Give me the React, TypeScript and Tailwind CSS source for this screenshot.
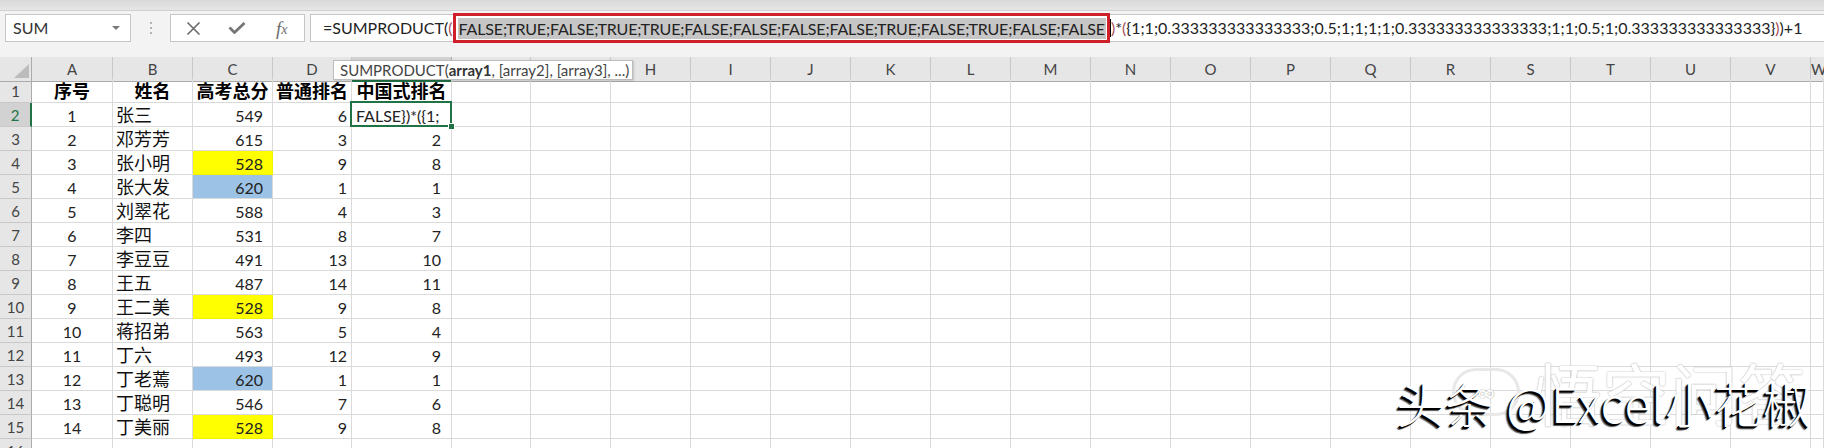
const COLS = ['A', 'B', 'C', 'D', 'E', 'F', 'G', 'H', 'I', 'J', 'K', 'L', 'M', 'N', 'O', 'P', 'Q', 'R', 'S', 'T', 'U', 'V', 'W'];

type Row = { no: number; name: string; score: number; rank: number; cn: number | string; fill?: 'y' | 'b' };

const rows: Row[] = [
  { no: 1, name: '张三', score: 549, rank: 6, cn: 'FALSE})*({1;' },
  { no: 2, name: '邓芳芳', score: 615, rank: 3, cn: 2 },
  { no: 3, name: '张小明', score: 528, rank: 9, cn: 8, fill: 'y' },
  { no: 4, name: '张大发', score: 620, rank: 1, cn: 1, fill: 'b' },
  { no: 5, name: '刘翠花', score: 588, rank: 4, cn: 3 },
  { no: 6, name: '李四', score: 531, rank: 8, cn: 7 },
  { no: 7, name: '李豆豆', score: 491, rank: 13, cn: 10 },
  { no: 8, name: '王五', score: 487, rank: 14, cn: 11 },
  { no: 9, name: '王二美', score: 528, rank: 9, cn: 8, fill: 'y' },
  { no: 10, name: '蒋招弟', score: 563, rank: 5, cn: 4 },
  { no: 11, name: '丁六', score: 493, rank: 12, cn: 9 },
  { no: 12, name: '丁老蔫', score: 620, rank: 1, cn: 1, fill: 'b' },
  { no: 13, name: '丁聪明', score: 546, rank: 7, cn: 6 },
  { no: 14, name: '丁美丽', score: 528, rank: 9, cn: 8, fill: 'y' },
];

const gridCols = 'grid grid-cols-[32px_81px_80px_80px_79px_100px_79px_80px_repeat(15,80px)_1fr]';
const cell = 'h-[24px] border-r border-b border-[#dadada] flex items-center pt-[2px] overflow-hidden whitespace-nowrap';
const rowHead = 'h-[24px] bg-[#e6e6e6] border-r border-b border-r-[#ababab] border-b-[#c8c8c8] flex items-center justify-center pt-[1px] text-[15px] text-[#444]';

function FormulaBar() {
  return (
    <div>
      <div className="h-[11px] bg-gradient-to-b from-[#d9d9d9] to-[#e6e6e6] border-b border-[#d0d0d0]" />
      <div className="h-[46px] flex items-start pt-[3px] bg-[#f3f3f3]">
        {/* name box */}
        <div className="ml-[5px] w-[126px] h-[28px] bg-white border border-[#c6c6c6] flex items-center pl-[7px] pr-[10px] text-[16px] text-[#333]">
          SUM
          <span className="ml-auto w-0 h-0 border-l-[4px] border-r-[4px] border-t-[4px] border-l-transparent border-r-transparent border-t-[#7a7a7a]" />
        </div>
        <div className="w-[39px] h-[28px] flex flex-col items-center justify-center gap-[3px]">
          <span className="w-[2px] h-[2px] bg-[#b4b4b4]" />
          <span className="w-[2px] h-[2px] bg-[#b4b4b4]" />
          <span className="w-[2px] h-[2px] bg-[#b4b4b4]" />
        </div>
        {/* cancel / enter / fx */}
        <div className="w-[135px] h-[28px] bg-white border border-[#c6c6c6] flex">
          <div className="w-[45px] flex items-center justify-center">
            <svg width="15" height="13" viewBox="0 0 15 13">
              <path d="M1.5 0.5 L13.5 12.5 M13.5 0.5 L1.5 12.5" stroke="#6d6d6d" strokeWidth="1.6" fill="none" />
            </svg>
          </div>
          <div className="w-[45px] flex items-center justify-center">
            <svg width="18" height="12" viewBox="0 0 18 12">
              <path d="M1.5 5.5 L6.5 10.5 L16.5 1" stroke="#767676" strokeWidth="2.8" fill="none" />
            </svg>
          </div>
          <div className="w-[45px] flex items-center justify-center font-['Liberation_Serif',serif] italic text-[#6d6d6d]">
            <span className="text-[19px] leading-none">f</span>
            <span className="text-[14px] leading-none mt-[4px]">x</span>
          </div>
        </div>
        {/* formula input */}
        <div className="ml-[5px] flex-1 h-[28px] bg-white border border-r-0 border-[#c6c6c6] flex items-center pl-[12px] text-[16px] text-[#222] whitespace-nowrap">
          <span>=SUMPRODUCT(</span>
          <span className="text-[#a8505a]">(</span>
          <span className="inline-flex items-center h-[30px] border-[3px] border-[#cf1f2a] pl-[2px] pr-[1px]">
            <span className="bg-[#c6c6c6] leading-[21px] px-[1px] tracking-[-0.15px]">
              FALSE;TRUE;FALSE;TRUE;TRUE;FALSE;FALSE;FALSE;FALSE;TRUE;FALSE;TRUE;FALSE;FALSE
            </span>
          </span>
          <span className="w-px h-[18px] bg-black" />
          <span className="text-[#a8505a]">)</span>
          <span>*</span>
          <span className="text-[#a8505a]">(</span>
          <span>{'{1;1;0.333333333333333;0.5;1;1;1;1;0.333333333333333;1;1;0.5;1;0.333333333333333}'}</span>
          <span className="text-[#a8505a]">)</span>
          <span>)+1</span>
        </div>
      </div>
    </div>
  );
}

function HeaderRow() {
  return (
    <div className={`${gridCols} h-[22px]`}>
      <div className="relative bg-[#e6e6e6] border-r border-b border-[#ababab]">
        <span className="absolute right-[2px] bottom-[3px] w-0 h-0 border-l-[15px] border-b-[14px] border-l-transparent border-b-[#bcbcbc]" />
      </div>
      {COLS.map((c) => (
        <div
          key={c}
          className={
            c === 'E'
              ? 'bg-[#d2d2d2] border-r border-[#ababab] border-b-2 border-b-[#217346] flex items-center justify-center text-[15px] text-[#217346]'
              : 'bg-[#e6e6e6] border-r border-r-[#c8c8c8] border-b border-b-[#ababab] flex items-center justify-center text-[15px] text-[#444]'
          }
        >
          {c}
        </div>
      ))}
    </div>
  );
}

function EmptyCells({ from }: { from: number }) {
  return (
    <>
      {COLS.slice(from).map((c) => (
        <div key={c} className={cell} />
      ))}
    </>
  );
}

function fillClass(fill?: 'y' | 'b') {
  if (fill === 'y') return 'bg-[#ffff00] border-[#f2f200]';
  if (fill === 'b') return 'bg-[#9cc2e5] border-[#93badf]';
  return '';
}

export default function App() {
  return (
    <div className="relative w-[1824px] h-[448px] overflow-hidden bg-white font-['Lato','Noto_Sans_CJK_SC',sans-serif] text-[#222]">
      <FormulaBar />
      <HeaderRow />

      {/* row 1: titles */}
      <div className={gridCols}>
        <div className={rowHead}>1</div>
        {['序号', '姓名', '高考总分', '普通排名', '中国式排名'].map((t) => (
          <div key={t} className={`${cell} justify-center text-[18px] font-bold text-black`}>
            {t}
          </div>
        ))}
        <EmptyCells from={5} />
      </div>

      {rows.map((r) => (
        <div key={r.no} className={gridCols}>
          <div
            className={
              r.no === 1
                ? 'h-[24px] bg-[#d2d2d2] border-b border-b-[#c8c8c8] border-r-2 border-r-[#217346] flex items-center justify-center pt-[1px] text-[15px] text-[#217346]'
                : rowHead
            }
          >
            {r.no + 1}
          </div>
          <div className={`${cell} justify-center text-[16px]`}>{r.no}</div>
          <div className={`${cell} pl-[3px] text-[18px] text-[#111]`}>{r.name}</div>
          <div className={`${cell} justify-end pr-[9px] text-[16px] ${fillClass(r.fill)}`}>{r.score}</div>
          <div className={`${cell} justify-end pr-[4px] text-[16px]`}>{r.rank}</div>
          {r.no === 1 ? (
            <div className={`${cell} relative pl-[4px] text-[16px] overflow-visible`}>
              <span className="overflow-hidden">{r.cn}</span>
              <span className="absolute -left-[2px] -top-[2px] -right-[1px] -bottom-[1px] border-2 border-[#217346]" />
              <span className="absolute -right-[4px] -bottom-[4px] w-[7px] h-[7px] bg-[#217346] border border-white" />
            </div>
          ) : (
            <div className={`${cell} justify-end pr-[10px] text-[16px]`}>{r.cn}</div>
          )}
          <EmptyCells from={5} />
        </div>
      ))}

      {/* row 16 */}
      <div className={gridCols}>
        <div className={rowHead}>16</div>
        <EmptyCells from={0} />
      </div>

      {/* function tooltip */}
      <div className="absolute left-[333px] top-[60px] w-[300px] h-[20px] bg-white border border-[#bcbcbc] shadow-[1px_1px_2px_rgba(0,0,0,0.15)] pl-[6px] text-[15px] leading-[18px] text-[#444] whitespace-nowrap">
        SUMPRODUCT(<b className="text-[#333]">array1</b>, [array2], [array3], ...)
      </div>

      {/* watermarks */}
      <div className="absolute left-[1452px] top-[358px] flex items-center gap-[14px] text-white [text-shadow:0_0_1px_#a0a0a0,0_0_2px_#cccccc]">
        <span className="w-[68px] h-[48px] rounded-full border-[3px] border-[#e8e8e8] flex items-center justify-center text-[24px]">
          ∞
        </span>
        <span className="text-[68px] leading-none font-['Noto_Sans_CJK_SC',sans-serif]">悟空问答</span>
      </div>
      <div className="absolute right-[12px] top-[378px] text-[48px] leading-none font-light font-['Noto_Sans_CJK_SC',sans-serif] text-white tracking-[1px] [text-shadow:-1px_1px_0_#000,-2px_2px_0_#000,-3px_3px_1px_#555]">
        头条 @Excel小花椒
      </div>
    </div>
  );
}
